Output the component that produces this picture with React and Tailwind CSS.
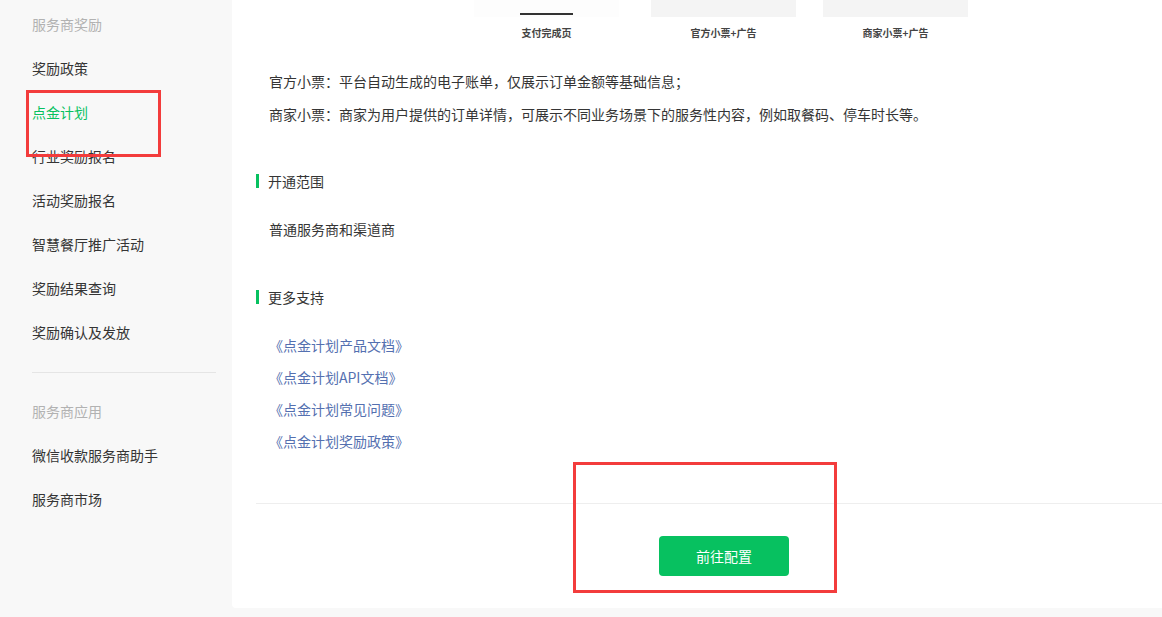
const font = { fontFamily: '"Noto Sans CJK SC", "Noto Sans", sans-serif' };

const groups = [
  {
    title: "服务商奖励",
    items: ["奖励政策", "点金计划", "行业奖励报名", "活动奖励报名", "智慧餐厅推广活动", "奖励结果查询", "奖励确认及发放"],
  },
  {
    title: "服务商应用",
    items: ["微信收款服务商助手", "服务商市场"],
  },
];

const links = ["《点金计划产品文档》", "《点金计划API文档》", "《点金计划常见问题》", "《点金计划奖励政策》"];

function Sidebar() {
  return (
    <aside className="w-[232px] shrink-0 pt-[2px] pl-[32px] pr-[16px]">
      {groups.map((g, gi) => (
        <div key={g.title}>
          {gi > 0 && <div className="mt-[18px] mb-[16px] h-px bg-[#e5e5e5]"></div>}
          <div className="h-[44px] flex items-center text-[14px] text-[#b2b2b2]">{g.title}</div>
          {g.items.map((item) => (
            <div
              key={item}
              className={
                item === "点金计划"
                  ? "h-[44px] flex items-center text-[14px] text-[#07c160]"
                  : "h-[44px] flex items-center text-[14px] text-[#353535]"
              }
            >
              {item}
            </div>
          ))}
        </div>
      ))}
    </aside>
  );
}

function SectionTitle({ children }) {
  return (
    <div className="flex items-center h-[22px]">
      <span className="w-[3px] h-[14px] bg-[#07c160]"></span>
      <span className="ml-[9px] text-[14px] text-[#353535]">{children}</span>
    </div>
  );
}

function Preview() {
  const thumbs = [
    { label: "支付完成页", bg: "bg-[#fdfdfd]", ml: "ml-[242px]", bar: true },
    { label: "官方小票+广告", bg: "bg-[#f4f4f4]", ml: "ml-[32px]" },
    { label: "商家小票+广告", bg: "bg-[#f4f4f4]", ml: "ml-[27px]" },
  ];
  return (
    <div className="flex">
      {thumbs.map((t) => (
        <div key={t.label} className={`${t.ml} w-[145px] flex flex-col items-center`}>
          <div className={`w-full h-[17px] ${t.bg} flex items-end justify-center`}>
            {t.bar && <div className="w-[53px] h-[2px] bg-[#333] mb-[2px]"></div>}
          </div>
          <div className="mt-[9px] text-[10px] leading-[14px] font-bold text-[#444]">{t.label}</div>
        </div>
      ))}
    </div>
  );
}

export default function App() {
  return (
    <div className="relative w-[1162px] h-[617px] overflow-hidden bg-[#f8f8f8] flex" style={font}>
      <Sidebar />
      <main className="flex-1 min-w-0 h-[608px] bg-white rounded-bl-[4px]">
        <Preview />
        <div className="pl-[24px]">
          <div className="ml-[13px] mt-[30px] text-[14px] leading-[22px] text-[#353535]">
            官方小票：平台自动生成的电子账单，仅展示订单金额等基础信息；
          </div>
          <div className="ml-[13px] mt-[11px] text-[14px] leading-[22px] text-[#353535]">
            商家小票：商家为用户提供的订单详情，可展示不同业务场景下的服务性内容，例如取餐码、停车时长等。
          </div>

          <div className="mt-[45px]">
            <SectionTitle>开通范围</SectionTitle>
          </div>
          <div className="ml-[13px] mt-[26px] text-[14px] leading-[22px] text-[#353535]">普通服务商和渠道商</div>

          <div className="mt-[46px]">
            <SectionTitle>更多支持</SectionTitle>
          </div>
          <div className="ml-[13px] mt-[26px] flex flex-col gap-[10px]">
            {links.map((l) => (
              <a key={l} className="text-[14px] leading-[22px] text-[#5470b0]">
                {l}
              </a>
            ))}
          </div>

          <div className="mt-[51px] h-px bg-[#eeeeee]"></div>
        </div>
        <div className="mt-[32px] ml-[427px]">
          <button className="w-[130px] h-[40px] rounded-[4px] bg-[#07c160] text-white text-[14px]">前往配置</button>
        </div>
      </main>

      {/* annotation boxes */}
      <div className="absolute left-[26px] top-[90px] w-[135px] h-[67px] border-[3px] border-[#f33c3c]"></div>
      <div className="absolute left-[573px] top-[462px] w-[264px] h-[131px] border-[3px] border-[#f33c3c]"></div>
    </div>
  );
}
